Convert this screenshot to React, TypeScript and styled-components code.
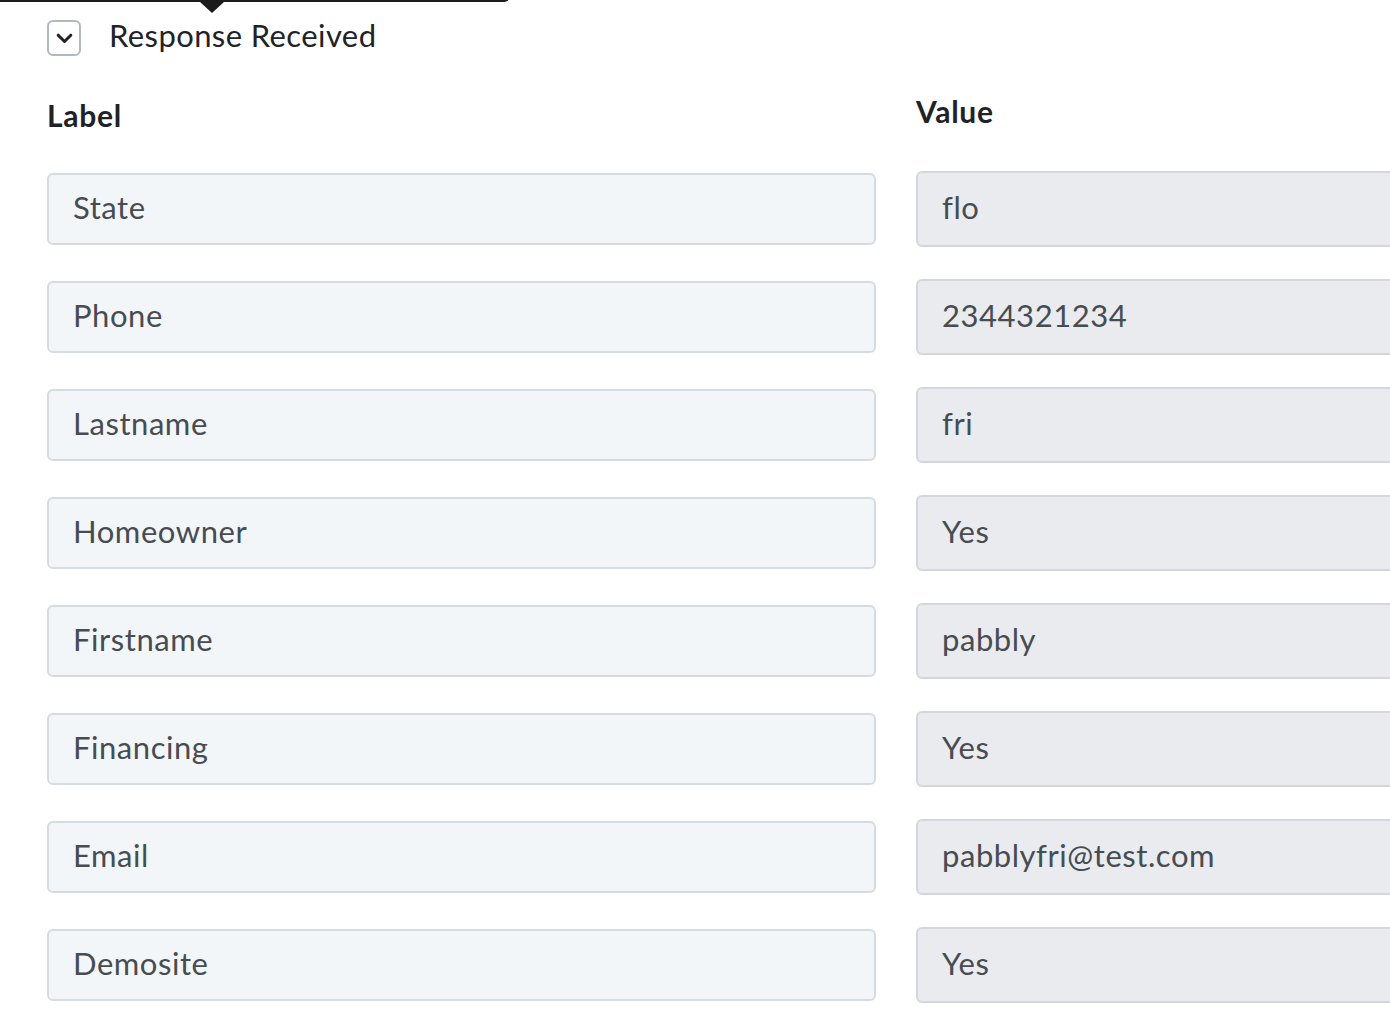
import React from 'react';
import styled, { createGlobalStyle } from 'styled-components';

const GlobalStyle = createGlobalStyle`
  html, body {
    margin: 0;
    padding: 0;
    background: #fff;
    overflow: hidden;
  }
  body {
    font-family: Lato, "Open Sans", sans-serif;
    color: #212529;
  }
`;

const Page = styled.div`
  position: relative;
  width: 1390px;
  height: 1030px;
  padding: 16px 0 0 47px;
  box-sizing: border-box;
  overflow: hidden;
`;

// dark tooltip hanging above the section, only its lower edge shows
const Tooltip = styled.div`
  position: absolute;
  left: -20px;
  top: -40px;
  width: 530px;
  height: 42px;
  background: #1b1b1b;
  border-radius: 6px;

  &::after {
    content: '';
    position: absolute;
    left: 220px;
    top: 42px;
    border-left: 12px solid transparent;
    border-right: 12px solid transparent;
    border-top: 11px solid #1b1b1b;
  }
`;

const SectionHeader = styled.div`
  display: flex;
  align-items: center;
  gap: 28px;
  height: 38px;
`;

const ToggleButton = styled.button`
  width: 34px;
  height: 36px;
  margin-top: 6px;
  padding: 0;
  border: 2px solid #b4b8bf;
  border-radius: 6px;
  background: #fff;
  display: flex;
  align-items: center;
  justify-content: center;
  box-sizing: border-box;
`;

const SectionTitle = styled.span`
  font-size: 31px;
  line-height: 38px;
  color: #1f2226;
  letter-spacing: 0.4px;
`;

const Grid = styled.div`
  display: grid;
  grid-template-columns: 829px 829px;
  column-gap: 40px;
  row-gap: 32px;
  align-items: center;
  margin-top: 41px;
`;

const ColumnHead = styled.div<{ $shift?: number }>`
  font-size: 30px;
  font-weight: 700;
  color: #1f2226;
  line-height: 36px;
  letter-spacing: 0.7px;
  transform: translateY(${p => p.$shift ?? 0}px);
  margin-bottom: 8px;
`;

const Field = styled.div<{ $readonly?: boolean }>`
  height: ${p => (p.$readonly ? 76 : 72)}px;
  box-sizing: border-box;
  display: flex;
  align-items: center;
  padding: 0 0 5px 24px;
  border: 2px solid ${p => (p.$readonly ? '#d3d7dc' : '#d6dbe0')};
  border-radius: 6px;
  background: ${p => (p.$readonly ? '#e9ebef' : '#f3f6f9')};
  font-size: 31px;
  color: #474c52;
  letter-spacing: 0.55px;
`;

const Chevron = () => (
  <svg width="17" height="11" viewBox="0 0 17 11" fill="none">
    <path d="M2.2 2.2l6.3 6.3 6.3-6.3" stroke="#1f2226" strokeWidth="3" strokeLinecap="round" strokeLinejoin="round" />
  </svg>
);

const rows: [string, string][] = [
  ['State', 'flo'],
  ['Phone', '2344321234'],
  ['Lastname', 'fri'],
  ['Homeowner', 'Yes'],
  ['Firstname', 'pabbly'],
  ['Financing', 'Yes'],
  ['Email', 'pabblyfri@test.com'],
  ['Demosite', 'Yes'],
];

const App: React.FC = () => {
  return (
    <>
      <GlobalStyle />
      <Page>
        <Tooltip />
        <SectionHeader>
          <ToggleButton>
            <Chevron />
          </ToggleButton>
          <SectionTitle>Response Received</SectionTitle>
        </SectionHeader>
        <Grid>
          <ColumnHead $shift={2}>Label</ColumnHead>
          <ColumnHead $shift={-2}>Value</ColumnHead>
          {rows.map(([label, value]) => (
            <React.Fragment key={label}>
              <Field>{label}</Field>
              <Field $readonly>{value}</Field>
            </React.Fragment>
          ))}
        </Grid>
      </Page>
    </>
  );
};

export default App;
